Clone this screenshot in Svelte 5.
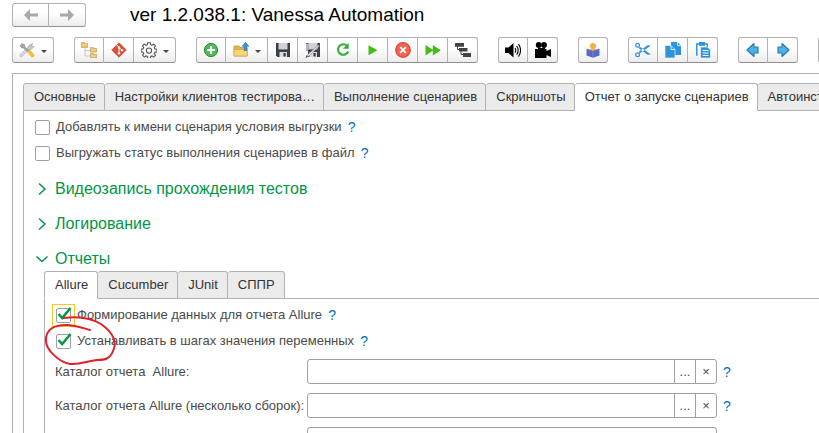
<script>
  const groups = [
    [{ icon: 'tools', label: 'Инструменты', menu: true }],
    [
      { icon: 'tree', label: 'Дерево' },
      { icon: 'git', label: 'Git' },
      { icon: 'gear', label: 'Настройки', menu: true }
    ],
    [
      { icon: 'add', label: 'Добавить' },
      { icon: 'open', label: 'Открыть', menu: true },
      { icon: 'save', label: 'Сохранить' },
      { icon: 'saveas', label: 'Сохранить как' },
      { icon: 'reload', label: 'Перезагрузить' },
      { icon: 'play', label: 'Выполнить' },
      { icon: 'stop', label: 'Остановить' },
      { icon: 'forward', label: 'Продолжить' },
      { icon: 'steps', label: 'Шаги' }
    ],
    [
      { icon: 'sound', label: 'Звук' },
      { icon: 'camera', label: 'Видео' }
    ],
    [{ icon: 'reader', label: 'Справка' }],
    [
      { icon: 'cut', label: 'Вырезать' },
      { icon: 'copy', label: 'Копировать' },
      { icon: 'paste', label: 'Вставить' }
    ],
    [
      { icon: 'left', label: 'Влево' },
      { icon: 'right', label: 'Вправо' }
    ],
    [{ icon: '', label: 'Ещё' }]
  ];

  const tabs = [
    'Основные',
    'Настройки клиентов тестирова…',
    'Выполнение сценариев',
    'Скриншоты',
    'Отчет о запуске сценариев',
    'Автоинструкции'
  ];
  let tab = $state(4);

  const reports = ['Allure', 'Cucumber', 'JUnit', 'СППР'];
  let report = $state(0);

  let options = $state([
    { id: 'cond', text: 'Добавлять к имени сценария условия выгрузки', on: false },
    { id: 'status', text: 'Выгружать статус выполнения сценариев в файл', on: false }
  ]);
  let allure = $state([
    { id: 'data', text: 'Формирование данных для отчета Allure', on: true, focus: true },
    { id: 'vars', text: 'Устанавливать в шагах значения переменных', on: true, focus: false }
  ]);
  let fields = $state([
    { id: 'dir', text: 'Каталог отчета\u00a0 Allure:', value: '', picker: true },
    { id: 'dirs', text: 'Каталог отчета Allure (несколько сборок):', value: '', picker: true },
    { id: 'extra', text: '', value: '', picker: false }
  ]);
  const closed = ['Видеозапись прохождения тестов', 'Логирование'];
</script>

{#snippet icon(name)}
  <svg class="icon" viewBox="0 0 16 16" aria-hidden="true">
    {#if name === 'tools'}
      <path d="M1 12.5 8 6.5l1.5 1.5-6.5 6.5H1z" fill="#d6dade" stroke="#aab0b5" stroke-width=".6" />
      <path d="M8 6.5 10 3.5 13.5 1.5 12.5 4 15 4.5 12 7.5 9.5 8z" fill="#c3c8cc" stroke="#8f979c" stroke-width=".6" />
      <path d="m2.5 1.5 3 1 .5 2.5 4 4-1.2 1.2-4.3-4L2 5.5 1 3l2 .8z" fill="#a1a8ac" stroke="#747e84" stroke-width=".5" />
      <path d="m8.5 9.5 1.8-1.8 4.4 4.8q.8 1.3-.4 2.2-1.2.7-2.2-.4z" fill="#f7bf25" stroke="#dda01b" stroke-width=".5" />
    {:else if name === 'tree'}
      <path d="M4 6v8h6M4 8.500h6" fill="none" stroke="#b9c9d0" />
      <path d="M.5.5h3l1 1h2v4h-6zM9.500 5.500h3l.5 1h2.500v3.500h-6zM9.500 11.500h3l.5 1h2.500V16h-6z" fill="#e8bd68" stroke="#cfa05a" stroke-width=".7" />
      <path d="M1 3h5M10 8h5M10 14h5" stroke="#f8dda0" />
    {:else if name === 'git'}
      <path d="m8 .8 7.200 7.200L8 15.200.8 8z" fill="#dd4b35" stroke="#dd4b35" stroke-linejoin="round" />
      <path d="m5.500 2.500 2.500 3v6M8 5.500 10.800 8" fill="none" stroke="#fff" stroke-width="1" />
      <circle cx="8" cy="5.500" r="1.200" fill="#fff" /><circle cx="8" cy="11.300" r="1.200" fill="#fff" /><circle cx="11" cy="8.300" r="1.200" fill="#fff" />
    {:else if name === 'gear'}
      <path d="M6.700.7h2.600l.4 2 1.300.6 1.700-1.200 1.800 1.800-1.200 1.700.6 1.300 2 .4v2.600l-2 .4-.6 1.300 1.200 1.700-1.800 1.800-1.700-1.200-1.300.6-.4 2H6.700l-.4-2-1.300-.6-1.700 1.200-1.800-1.800 1.200-1.700-.6-1.300-2-.4V7.300l2-.4.6-1.300-1.200-1.700 1.800-1.800L5 3.300l1.300-.6z" fill="none" stroke="#555" stroke-width="1.100" />
      <circle cx="8" cy="8.600" r="2.600" fill="none" stroke="#555" stroke-width="1.100" />
    {:else if name === 'add'}
      <circle cx="8" cy="8" r="6.600" fill="#4dbb55" stroke="#2a8a3a" stroke-width="1" />
      <path d="M8 4v8M4 8h8" stroke="#fff" stroke-width="2.200" />
    {:else if name === 'open'}
      <path d="M1 4h5l1 1.500h7V14H1z" fill="#e5b34d" stroke="#cc9438" stroke-width=".8" />
      <path d="M1 14V7.500h13.300V14z" fill="#f8d578" stroke="#d6a040" stroke-width=".7" />
      <path d="M12.500.3 15.800 4.300h-2V8.500h-2.600V4.300h-2z" fill="#3698e8" stroke="#1a67a9" stroke-width=".6" />
    {:else if name === 'save' || name === 'saveas'}
      <path d="M1 1h14v14H2.500L1 13.500z" fill="#3c3f47" />
      <path d="M3.500 1h9v6h-9z" fill="#ccd1d8" />
      <path d="M3.500 7h9v1h-9z" fill="#797f88" />
      <path d="M4.500 10h7.500v5H4.500z" fill="#d9dce0" />
      <path d="M8.500 11h2.200v3.500H8.500z" fill="#36393f" />
      {#if name === 'saveas'}
        <path d="M1 1.500V10l3-2.500V1.500z" fill="#aeb3ba" />
        <path d="M0 9h3v7H0z" fill="#fff" />
        <path d="m1 15.500 1.300-2.600L13.500 3l1 1L4 14z" fill="#e6e6e6" stroke="#777" stroke-width=".6" />
        <path d="m.3 15.800 1.300-2.600 1.500 1.500z" fill="#555" />
      {/if}
    {:else if name === 'reload'}
      <path d="M12.300 4A5.300 5.300 0 1 0 13.200 9.500" fill="none" stroke="#2fae3a" stroke-width="2.100" />
      <path d="M13.700 1V6.800H7.900z" fill="#2fae3a" />
    {:else if name === 'play'}
      <path d="M3.500 3.300 12.500 8.300 3.500 13.300z" fill="#45bb17" />
    {:else if name === 'stop'}
      <circle cx="8" cy="8" r="7.300" fill="#f2644f" stroke="#d8483c" stroke-width="1.200" />
      <path d="m5.200 5.200 5.600 5.600m0-5.600-5.600 5.600" stroke="#fff" stroke-width="1.900" />
    {:else if name === 'forward'}
      <path d="M.5 3 8.500 8.200l-8 5.200zM7.800 3l8 5.200-8 5.200z" fill="#45bb17" />
    {:else if name === 'steps'}
      <path d="M2.500 4v3.500H5M6 9v3.500h3" fill="none" stroke="#444" />
      <path d="M0 1h9v3.700H0zM4 6h8.500v3.500H4zM8 11h8v4H8z" fill="#424242" />
    {:else if name === 'sound'}
      <path d="M0 5.500h3.500L8.500 1v14.500L3.500 11H0z" fill="#000" />
      <path d="M10 6q1.500 2.300 0 4.600M11.700 4q3 4.300 0 8.600M13.500 2q4.200 6.300 0 12.600" fill="none" stroke="#000" stroke-width="1.100" />
    {:else if name === 'camera'}
      <circle cx="3.700" cy="3" r="2.900" /><circle cx="9" cy="3" r="2.900" />
      <path d="M0 7h11.500v2L16 7v8l-4.500-2v3H0z" />
      <path d="M3 6.500h7" stroke="#000" />
    {:else if name === 'reader'}
      <circle cx="8" cy="4" r="3" fill="#f3ae45" />
      <path d="M4.500 9q0-3 3.500-2.500 3.500-.5 3.500 2.500z" fill="#f3ae45" />
      <path d="M1.500 6.500 8 9l6.500-2.500v7L8 15.800 1.500 13.500z" fill="#5968c4" />
      <path d="M8 9v6.500" stroke="#8290dd" stroke-width=".8" />
    {:else if name === 'cut'}
      <path d="M4.500 4.500 16 12.500l-3.500.3L4 6.500zM4.500 11.500 16 3.500l-3.500-.3L4 9.500z" fill="#2d94dc" />
      <circle cx="2.600" cy="3.300" r="1.900" fill="none" stroke="#2d94dc" stroke-width="1.200" />
      <circle cx="2.600" cy="12.700" r="1.900" fill="none" stroke="#2d94dc" stroke-width="1.200" />
    {:else if name === 'copy'}
      <path d="M6 0h6.500L16 3.500V13H6z" fill="#2d94dc" />
      <path d="M12.500 0v3.500H16" fill="none" stroke="#fff" stroke-width=".8" />
      <path d="M0 3.500h6l4 4V16H0z" fill="#2d94dc" stroke="#fff" stroke-width=".6" />
      <path d="M6 3.500v4h4" fill="none" stroke="#fff" stroke-width=".8" />
    {:else if name === 'paste'}
      <path d="M1.800 13.800V2h10.400v3" fill="none" stroke="#2d94dc" stroke-width="1.500" />
      <path d="M4 0h6v3.800H4z" fill="#2d94dc" />
      <path d="M5.500 5h7L15.500 8v8H5.500z" fill="#2d94dc" stroke="#fff" stroke-width=".6" />
      <path d="M7.500 8.500h6M7.500 11h6M7.500 13.500h6" stroke="#fff" />
    {:else if name === 'left'}
      <path d="M2 8 9 1.500V5h4v6H9v3.500z" fill="#4db1ee" stroke="#2579a5" stroke-width="1.100" stroke-linejoin="round" />
    {:else if name === 'right'}
      <path d="M14 8 7 1.500V5H3v6h4v3.500z" fill="#4db1ee" stroke="#2579a5" stroke-width="1.100" stroke-linejoin="round" />
    {/if}
  </svg>
{/snippet}

{#snippet check(item)}
  <div class="option">
    <label for={item.id}>
      <span class="box" class:focus={item.focus}>
        <input id={item.id} type="checkbox" bind:checked={item.on} />
        {#if item.on}
          <svg viewBox="0 0 15 15" aria-hidden="true"><path d="M2.500 6 6.200 10 14.500 0" /></svg>
        {/if}
      </span>
      <span>{item.text}</span>
    </label>
    <button class="help" type="button" aria-label="Подсказка">?</button>
  </div>
{/snippet}

<div class="window">
  <header>
    <div class="group nav">
      <button type="button" aria-label="Назад">
        <svg viewBox="0 0 14 12" aria-hidden="true"><path d="M6 0 0 6l6 6V7.500h8v-3H6z" /></svg>
      </button>
      <button type="button" aria-label="Вперед">
        <svg viewBox="0 0 14 12" aria-hidden="true"><path d="m8 0 6 6-6 6V7.500H0v-3h8z" /></svg>
      </button>
    </div>
    <h1>ver 1.2.038.1: Vanessa Automation</h1>
  </header>

  <div class="toolbar">
    {#each groups as group}
      <div class="group">
        {#each group as item}
          <button type="button" class:menu={item.menu} aria-label={item.label}>
            {@render icon(item.icon)}
            {#if item.menu}<i class="caret"></i>{/if}
          </button>
        {/each}
      </div>
    {/each}
  </div>

  <main>
    <div class="tabs" role="tablist">
      {#each tabs as name, i}
        <button type="button" role="tab" aria-selected={tab === i} onclick={() => (tab = i)}>{name}</button>
      {/each}
    </div>
    <div class="pane">
      {#each options as item}{@render check(item)}{/each}

      <div class="sections">
        {#each closed as name}
          <button class="section" type="button" aria-expanded="false">
            <svg viewBox="0 0 12 12" aria-hidden="true"><path d="m4 .5 6 5.500-6 5.500" /></svg>{name}
          </button>
        {/each}
        <button class="section" type="button" aria-expanded="true">
          <svg viewBox="0 0 12 12" aria-hidden="true"><path d="m1.500 3.500 5.500 5 5.500-5" /></svg>Отчеты
        </button>
      </div>

      <div class="reports">
        <div class="tabs" role="tablist">
          {#each reports as name, i}
            <button type="button" role="tab" aria-selected={report === i} onclick={() => (report = i)}>{name}</button>
          {/each}
          <span class="rest"></span>
        </div>
        <div class="pane inner">
          {#each allure as item}{@render check(item)}{/each}
          <div class="fields">
            {#each fields as field}
              <div class="field">
                <label for={field.id}>{field.text}</label>
                <div class="entry">
                  <input id={field.id} type="text" bind:value={field.value} />
                  {#if field.picker}
                    <button type="button" aria-label="Выбрать">...</button>
                    <button type="button" aria-label="Очистить" onclick={() => (field.value = '')}>×</button>
                  {/if}
                </div>
                {#if field.picker}
                  <button class="help" type="button" aria-label="Подсказка">?</button>
                {/if}
              </div>
            {/each}
          </div>
          <svg class="mark" viewBox="0 0 74 54" aria-hidden="true">
            <path d="M20 5C34 3 47 5 57 11 70 20 73 30 69 38 66 46 61 47 53 47 43 48 36 52 26 51 15 49 2 37 2 28 1 16 11 12 22 12 31 12 39 15 46 17" />
          </svg>
        </div>
      </div>
    </div>
  </main>
</div>

<style>
  :global(body) {
    margin: 0;
    background: #fff;
  }
  .window {
    height: 100vh;
    overflow: hidden;
    box-sizing: border-box;
    padding: 3px 0 0 12px;
    color: #4a4a4a;
    font: 13px/16px 'Liberation Sans', Arial, sans-serif;
  }
  button,
  input {
    box-sizing: border-box;
    margin: 0;
    padding: 0;
    font: inherit;
    color: inherit;
    background: none;
    border: 0;
  }
  header {
    display: flex;
    align-items: center;
    gap: 44px;
  }
  h1 {
    margin: 0;
    font-size: 19px;
    line-height: 24px;
    font-weight: 400;
    color: #000;
    white-space: nowrap;
  }
  .group {
    display: flex;
    flex: none;
  }
  .group button {
    display: flex;
    align-items: center;
    justify-content: center;
    width: 30px;
    height: 26px;
    border: 1px solid #b2b2b2;
    border-left-width: 0;
    border-bottom-color: #8f8f8f;
    background: linear-gradient(#fff 40%, #ececec);
  }
  .group button:first-child {
    border-left-width: 1px;
    border-top-left-radius: 3px;
    border-bottom-left-radius: 3px;
  }
  .group button:last-child {
    border-top-right-radius: 3px;
    border-bottom-right-radius: 3px;
  }
  .group .menu {
    width: 42px;
    gap: 6px;
  }
  .group.nav button {
    width: 37px;
    height: 24px;
  }
  .nav svg {
    width: 14px;
    height: 12px;
    fill: #a8a8a8;
  }
  .icon {
    width: 16px;
    height: 16px;
    flex: none;
  }
  .caret {
    border: 3px solid transparent;
    border-top-color: #444;
    border-bottom: 0;
    margin-top: 3px;
  }
  .toolbar {
    display: flex;
    gap: 20px;
    margin-top: 10px;
  }
  main {
    margin-top: 10px;
    padding: 9px 0 0 10px;
    border: solid #b2b2b2;
    border-width: 1px 0 0 1px;
  }
  .tabs {
    display: flex;
  }
  .tabs button {
    flex: none;
    height: 28px;
    padding: 0 8px 0 10px;
    color: #333;
    white-space: nowrap;
    background: #ebebeb;
    border: 1px solid #b2b2b2;
    border-left-width: 0;
    border-radius: 3px 3px 0 0;
  }
  .tabs button:first-child {
    border-left-width: 1px;
  }
  .tabs [aria-selected='true'] {
    background: #fff;
    border-bottom-color: #fff;
  }
  .reports .tabs button {
    padding-right: 9px;
  }
  .rest {
    flex: 1;
    border-bottom: 1px solid #b2b2b2;
  }
  .pane {
    padding: 3px 0 0 11px;
    border-left: 1px solid #b2b2b2;
  }
  .option,
  .option label {
    display: flex;
    align-items: center;
    height: 26px;
    white-space: nowrap;
  }
  .option label {
    gap: 6px;
  }
  .box {
    position: relative;
    width: 15px;
    height: 15px;
  }
  .box input {
    display: block;
    appearance: none;
    width: 15px;
    height: 15px;
    border: 1px solid #a0a0a0;
    border-radius: 2px;
    background: #fff;
  }
  .box svg {
    position: absolute;
    inset: 0;
    overflow: visible;
    fill: none;
    stroke: #009646;
    stroke-width: 2.5;
  }
  .box.focus {
    outline: 1px solid #f5c828;
    outline-offset: 3px;
  }
  .help {
    width: 20px;
    flex: none;
    color: #0070ba;
    font-size: 14px;
  }
  .sections {
    padding-top: 5px;
  }
  .section {
    display: flex;
    align-items: center;
    gap: 8px;
    height: 35px;
    font-size: 16px;
    line-height: 20px;
    color: #009646;
  }
  .section svg {
    width: 12px;
    height: 12px;
    overflow: visible;
    fill: none;
    stroke: #009646;
    stroke-width: 1.5;
  }
  .reports {
    margin: -5px 0 0 9px;
  }
  .inner {
    position: relative;
  }
  .fields {
    display: grid;
    gap: 9px;
    padding-top: 5px;
  }
  .field {
    display: grid;
    grid-template-columns: 252px 410px 20px;
    align-items: center;
    margin-left: -1px;
    white-space: nowrap;
  }
  .entry {
    display: flex;
    box-sizing: border-box;
    height: 25px;
    border: 1px solid #a0a0a0;
    border-radius: 3px;
  }
  .entry input {
    flex: 1;
    min-width: 0;
    padding: 0 6px;
  }
  .entry button {
    width: 21px;
    border-left: 1px solid #a0a0a0;
  }
  .mark {
    position: absolute;
    left: -1px;
    top: 14px;
    width: 74px;
    height: 54px;
    fill: none;
    stroke: #e0202a;
    stroke-width: 2;
    stroke-linecap: round;
    pointer-events: none;
  }
</style>
